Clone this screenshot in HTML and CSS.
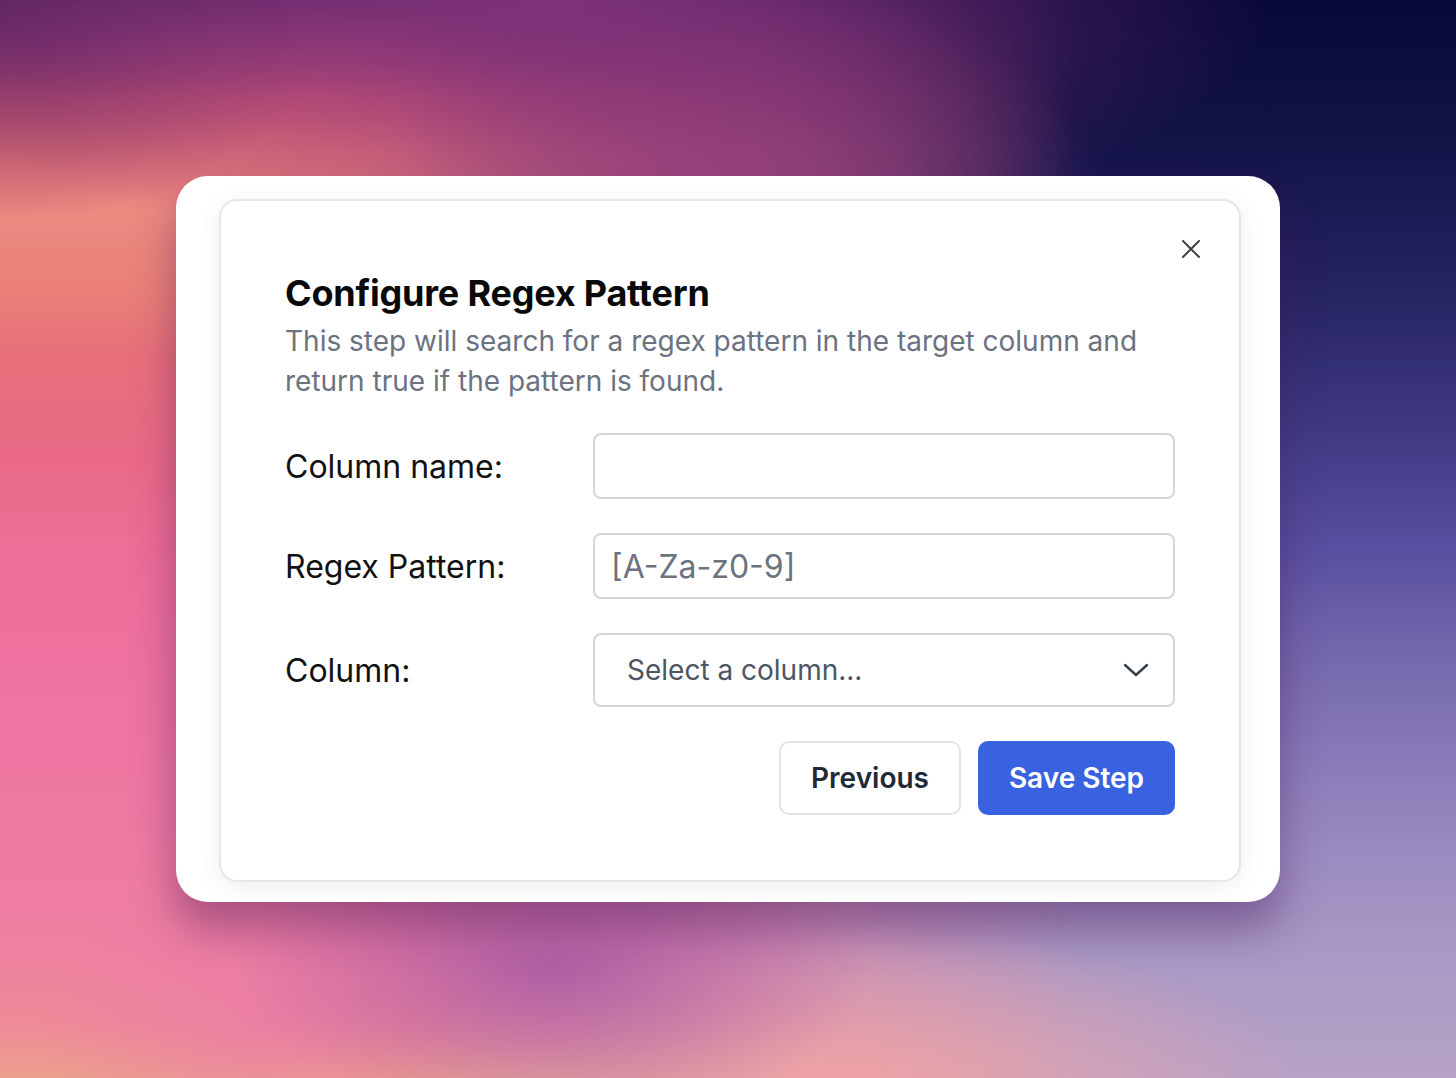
FILE: index.html
```html
<!DOCTYPE html>
<html lang="en">
<head>
<meta charset="utf-8">
<title>Configure Regex Pattern</title>
<link rel="stylesheet" href="styles.css">
</head>
<body>
<div class="stage">
  <div class="frame">
    <div class="dialog">
      <button class="close" aria-label="Close">
        <svg width="20" height="20" viewBox="0 0 20 20" fill="none" stroke="#3f3f46" stroke-width="2" stroke-linecap="round"><path d="M2 2L18 18M18 2L2 18"/></svg>
      </button>
      <h1 class="title">Configure Regex Pattern</h1>
      <p class="desc">This step will search for a regex pattern in the target column and return true if the pattern is found.</p>
      <div class="form">
        <label class="label">Column name:</label>
        <div class="field"></div>
        <label class="label">Regex Pattern:</label>
        <div class="field"><span class="placeholder">[A-Za-z0-9]</span></div>
        <label class="label">Column:</label>
        <div class="field select"><span class="select-text">Select a column...</span>
          <svg class="chev" width="26" height="14" viewBox="0 0 26 14" fill="none" stroke="#374151" stroke-width="2.4" stroke-linecap="round" stroke-linejoin="round"><path d="M2 2L13 12L24 2"/></svg>
        </div>
      </div>
      <div class="actions">
        <button class="btn btn-secondary">Previous</button>
        <button class="btn btn-primary">Save Step</button>
      </div>
    </div>
  </div>
</div>
</body>
</html>
```
FILE: styles.css
```css
* { box-sizing: border-box; }
html, body { margin: 0; padding: 0; }
body {
  width: 1456px;
  height: 1078px;
  overflow: hidden;
  font-family: "Inter", "Noto Sans", sans-serif;
  background: linear-gradient(to bottom,
    #08083a 0%, #121246 12%, #262462 27%, #403a84 40%, #5850a0 51%,
    #7266ac 60%, #887ab8 70%, #9a8bc0 79%, #a898c4 88%, #b6a2c6 100%);
}
.stage {
  position: relative;
  width: 1456px;
  height: 1078px;
  display: flex;
  align-items: center;
  justify-content: center;
}
/* pink/coral wash on the left half of the backdrop */
.stage::before {
  content: "";
  position: absolute;
  inset: 0;
  background: linear-gradient(to bottom,
    #5e2660 0%, #a04070 4%, #dc5e72 9%, #e87478 14%, #ec8a80 20%,
    #ea8078 27%, #e8707a 33%, #ea6a86 42%, #ee6e98 52%, #ee72a0 62%,
    #ee78a2 75%, #ee80a0 88%, #ee8a98 95%, #eca08c 100%);
  -webkit-mask-image: linear-gradient(to right, #000 0%, #000 28%, rgba(0,0,0,0.55) 52%, transparent 74%);
  mask-image: linear-gradient(to right, #000 0%, #000 28%, rgba(0,0,0,0.55) 52%, transparent 74%);
}
/* soft colour blobs over the wash */
.stage::after {
  content: "";
  position: absolute;
  inset: 0;
  background:
    radial-gradient(ellipse 720px 250px at 38% 0%, rgba(128,50,122,0.95) 0%, rgba(128,50,122,0.6) 40%, rgba(128,50,122,0) 100%),
    radial-gradient(ellipse 340px 220px at 0% 0%, rgba(92,36,96,0.9) 0%, rgba(92,36,96,0) 100%),
    radial-gradient(ellipse 380px 240px at 50% 20%, rgba(168,68,136,0.8) 0%, rgba(168,68,136,0) 100%),
    radial-gradient(ellipse 320px 150px at 38% 90%, rgba(168,88,164,0.85) 0%, rgba(168,88,164,0) 100%),
    radial-gradient(ellipse 220px 160px at 18% 95%, rgba(234,120,170,0.6) 0%, rgba(234,120,170,0) 100%),
    radial-gradient(ellipse 460px 150px at 58% 100%, rgba(242,162,165,0.9) 0%, rgba(242,162,165,0) 100%);
}
.frame {
  position: relative;
  z-index: 1;
  width: 1104px;
  height: 726px;
  background: #fff;
  border-radius: 32px;
  padding: 23px 39px 20px 43px;
  box-shadow: 0 26px 44px rgba(70, 20, 80, 0.42);
}
.dialog {
  position: relative;
  height: 100%;
  background: #fff;
  border: 2px solid #e7e7e9;
  border-radius: 18px;
  box-shadow: 0 4px 24px rgba(0, 0, 0, 0.07);
  padding: 64px;
}
.close {
  position: absolute;
  top: 38px;
  right: 38px;
  width: 20px;
  height: 20px;
  padding: 0;
  border: 0;
  background: none;
  display: flex;
}
.title {
  margin: 0;
  font-size: 36px;
  line-height: 56px;
  font-weight: 700;
  color: #0a0a0a;
  letter-spacing: -0.2px;
}
.desc {
  margin: 0;
  font-size: 28px;
  line-height: 40px;
  color: #6b7280;
  max-width: 890px;
}
.form {
  margin-top: 32px;
  display: grid;
  grid-template-columns: 308px 1fr;
  row-gap: 34px;
  align-items: center;
}
.label {
  font-size: 32px;
  color: #111;
}
.field {
  height: 66px;
  border: 2px solid #d4d6db;
  border-radius: 8px;
  background: #fff;
  display: flex;
  align-items: center;
  padding: 0 16px;
}
.placeholder {
  font-size: 32px;
  color: #6b7280;
}
.select {
  height: 74px;
  padding: 0 24px 0 32px;
  justify-content: space-between;
}
.select-text {
  font-size: 28px;
  color: #4b5563;
}
.chev { display: block; }
.actions {
  margin-top: 34px;
  display: flex;
  justify-content: flex-end;
  gap: 17px;
}
.btn {
  height: 74px;
  border-radius: 10px;
  font-family: inherit;
  font-size: 28px;
  font-weight: 600;
  padding: 0;
  white-space: nowrap;
  cursor: pointer;
}
.btn-secondary {
  background: #fff;
  border: 2px solid #e2e4e8;
  color: #1f2937;
  width: 182px;
}
.btn-primary {
  background: #3962e0;
  border: 0;
  color: #fff;
  width: 197px;
}
```
